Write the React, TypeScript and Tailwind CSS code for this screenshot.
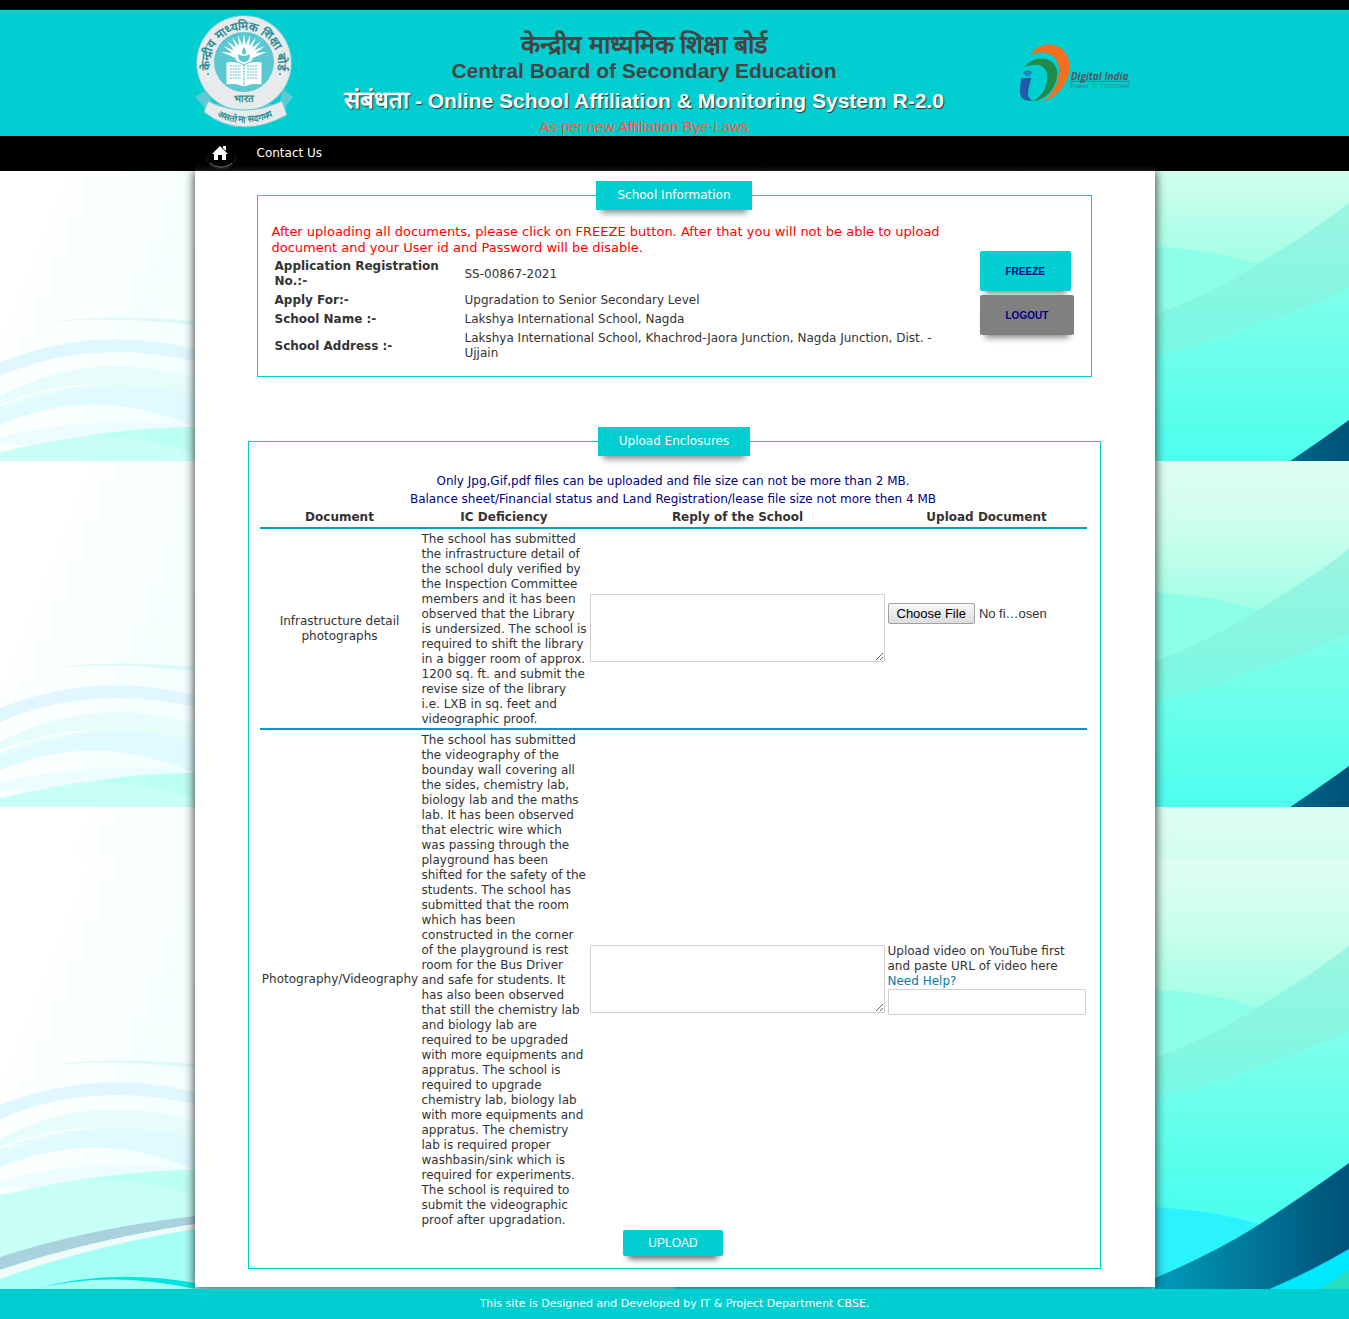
import React, { useId } from "react";

const infrastructureNote = `The school has submitted
the infrastructure detail of
the school duly verified by
the Inspection Committee
members and it has been
observed that the Library
is undersized. The school is
required to shift the library
in a bigger room of approx.
1200 sq. ft. and submit the
revise size of the library
i.e. LXB in sq. feet and
videographic proof.`;

const videographyNote = `The school has submitted
the videography of the
bounday wall covering all
the sides, chemistry lab,
biology lab and the maths
lab. It has been observed
that electric wire which
was passing through the
playground has been
shifted for the safety of the
students. The school has
submitted that the room
which has been
constructed in the corner
of the playground is rest
room for the Bus Driver
and safe for students. It
has also been observed
that still the chemistry lab
and biology lab are
required to be upgraded
with more equipments and
appratus. The school is
required to upgrade
chemistry lab, biology lab
with more equipments and
appratus. The chemistry
lab is required proper
washbasin/sink which is
required for experiments.
The school is required to
submit the videographic
proof after upgradation.`;

function Wave({ height, className }: { height: number; className: string }) {
  const id = useId();
  return (
    <svg
      className={`block w-full shrink-0 ${className}`}
      viewBox={`0 0 1349 ${height}`}
      preserveAspectRatio="none"
      aria-hidden="true"
    >
      <defs>
        <linearGradient id={`${id}l`} x1="0" x2="300" y1="0" y2="120" gradientUnits="userSpaceOnUse">
          <stop offset="0.2" stopColor="#ffffff" />
          <stop offset="1" stopColor="#effffe" />
        </linearGradient>
        <linearGradient id={`${id}r`} x1="0" x2="0" y1="0" y2="350" gradientUnits="userSpaceOnUse">
          <stop offset="0" stopColor="#e0fdf4" />
          <stop offset="0.2" stopColor="#cbfeee" />
          <stop offset="0.42" stopColor="#a2ffe5" />
          <stop offset="1" stopColor="#7effe8" />
        </linearGradient>
        <linearGradient id={`${id}a`} x1="0" x2="0" y1="170" y2="350" gradientUnits="userSpaceOnUse">
          <stop offset="0" stopColor="#80ffea" />
          <stop offset="1" stopColor="#4cffee" />
        </linearGradient>
        <linearGradient id={`${id}b`} x1="0" x2="0" y1="88" y2="248" gradientUnits="userSpaceOnUse">
          <stop offset="0" stopColor="#9cf5e2" />
          <stop offset="0.6" stopColor="#84f6e1" />
          <stop offset="1" stopColor="#76fce6" />
        </linearGradient>
        <linearGradient id={`${id}d`} x1="1155" x2="1340" y1="0" y2="0" gradientUnits="userSpaceOnUse">
          <stop offset="0" stopColor="#009cbb" />
          <stop offset="1" stopColor="#00547a" />
        </linearGradient>
      </defs>
      <rect width="675" height="470" fill={`url(#${id}l)`} />
      <path d="M40 208Q110 198 195 206L400 260V270L195 210Q110 200 40 208Z" fill="#dcfaf5" />
      <path d="M0 247C60 224 120 216 195 234L400 300V320L195 246C120 230 60 236 0 261Z" fill="#e0f7ff" />
      <path d="M0 281C60 250 120 242 195 263L400 330V380L195 312C120 280 60 285 0 309Z" fill="#e6fdfa" />
      <path d="M0 296C60 272 120 262 195 280L400 330V380L195 312C120 280 60 285 0 309Z" fill="#e0fbff" />
      <path d="M0 290Q40 274 85 270" stroke="#fff" strokeWidth="1.5" fill="none" />
      <path d="M0 322Q100 298 195 312V330H0Z" fill="#ecfcff" />
      <path d="M0 337Q110 312 195 312L675 330V470H0Z" fill="#c8fff6" />
      <path d="M90 321Q150 312 195 312V338Q150 322 90 321Z" fill="#bcfff5" />
      <path d="M0 421Q90 382 195 371L675 360V470H0Z" fill="#a5fff5" />
      <path d="M0 399Q90 370 195 358V366Q90 382 0 412Z" fill="#a9d1de" />
      <path d="M0 412Q90 382 195 366V371Q90 388 0 421Z" fill="#effcf9" />
      <path d="M35 431Q110 410 195 425V431Q110 412 35 431Z" fill="#00e4df" />
      <rect x="674" width="675" height="470" fill={`url(#${id}r)`} />
      <path d="M674 132H1155Q1210 134 1258 149L1349 180V470H674Z" fill="#8dffe9" />
      <path d="M674 248V220H1155V200Q1210 180 1258 149Q1310 118 1349 88V240H1155Z" fill={`url(#${id}b)`} />
      <path d="M674 250L1155 240Q1200 232 1255 210Q1310 192 1349 173V470H674Z" fill={`url(#${id}a)`} />
      <path d="M674 349H1155Q1210 352 1260 366V470H674Z" fill="#2bf2ff" />
      <path d="M1155 470V420Q1215 395 1260 366Q1315 330 1349 305V470Z" fill={`url(#${id}d)`} />
      <path d="M1265 433Q1310 414 1349 391V470H1265Z" fill="#00e8ff" />
      <path d="M1316 433Q1332 424 1349 412V470H1316Z" fill="#28dcbe" />
    </svg>
  );
}

function Emblem() {
  const rays = [-75, -60, -45, -30, -15, 0, 15, 30, 45, 60, 75];
  return (
    <svg className="block h-[114px] w-[98px]" viewBox="0 0 98 114" role="img" aria-label="CBSE emblem">
      <path d="M0 83L12 75L18 90L84 90L88 75L98 83L91 92L91 101Q72 113 50 113Q26 113 10 99L9 93Z" fill="#5ccad2" />
      <circle cx="49" cy="49" r="48" fill="#62cbd3" />
      <circle cx="49" cy="49" r="47" fill="#e9eaec" />
      <circle cx="49" cy="48" r="30" fill="#59c8d1" />
      <g fill="#fff">
        {rays.map((a) => (
          <path key={a} d="M46 40L49 20L52 40Z" transform={`rotate(${a} 49 44)`} />
        ))}
        <circle cx="49" cy="42" r="9" />
      </g>
      <path d="M43 40Q49 44 55 40Q55 48 49 48Q43 48 43 40Z" fill="#59c8d1" />
      <path d="M49 33Q53 38 49 41Q45 38 49 33Z" fill="#59c8d1" />
      <path d="M31 48Q41 46 49 51Q57 46 67 48V71Q57 69 49 73Q41 69 31 71Z" fill="#fff" stroke="#59c8d1" />
      <path
        d="M49 51V72M35 52H46M35 55H46M35 58H46M35 61H46M35 64H46M52 52H63M52 55H63M52 58H63M52 61H63M52 64H63"
        stroke="#59c8d1"
        strokeWidth="1.2"
        strokeDasharray="2 0.6"
      />
      <path d="M13 87Q49 105 87 87L92 101Q70 113 50 113Q28 113 9 98Z" fill="#e9eaec" stroke="#62cbd3" />
      <path id="emblem-top" d="M16.5 60A34 34 0 1 1 81.5 60" fill="none" />
      <path id="emblem-bottom" d="M13 97Q49 120 87 97" fill="none" />
      <g fill="#2e8f98" fontFamily="Liberation Sans, sans-serif" fontWeight="bold">
        <text fontSize="12" textAnchor="middle">
          <textPath href="#emblem-top" startOffset="50%">केन्द्रीय माध्यमिक शिक्षा बोर्ड</textPath>
        </text>
        <text x="49" y="88" fontSize="10" textAnchor="middle">भारत</text>
        <text fontSize="9" textAnchor="middle">
          <textPath href="#emblem-bottom" startOffset="50%">असतो मा सदगमय</textPath>
        </text>
        <circle cx="13" cy="60" r="1" />
        <circle cx="85" cy="60" r="1" />
      </g>
    </svg>
  );
}

function DigitalIndia() {
  return (
    <svg className="block h-[60px] w-[114px]" viewBox="57 40 342 180" role="img" aria-label="Digital India">
      <path d="M92 77C112 30 204 28 209 108C210 158 172 204 130 214C158 192 176 162 177 122C178 74 134 56 92 77Z" fill="#f37021" />
      <path d="M75 112C95 76 168 74 172 130C172 172 138 212 98 215C128 200 144 168 142 136C139 104 105 98 75 112Z" fill="#208b48" />
      <path d="M64 145H94C88 166 82 186 85 200Q88 210 100 214Q62 216 60 190Q60 168 64 145Z" fill="#2458a8" />
      <path d="M69 130L76 123H90L97 130L83 142Z" fill="#1f6fb0" />
      <path d="M69 130H97M76 123L83 130L90 123M78 130L83 141L88 130" stroke="#39a7cf" strokeWidth="1.5" fill="none" />
      <g fill="#4c5a60">
        <text x="212" y="151" fontSize="30" fontWeight="bold" fontStyle="italic" fontFamily="Open Sans, sans-serif">
          Digital India
        </text>
        <path d="M208 155H390" stroke="#4c5a60" strokeWidth="2" />
        <text x="211" y="174" fontSize="19" fill="#3d7f86" fontFamily="DejaVu Sans, sans-serif">
          Power To Empower
        </text>
      </g>
    </svg>
  );
}

const legendClass =
  "mx-auto bg-[#00ced1] px-[21px] text-[12px] leading-[29px] text-white shadow-[0_8px_6px_-5px_rgba(0,0,0,0.45)]";
const textareaClass =
  "block h-[68px] w-[295px] resize rounded-[1px] border border-[#d0d0d0] bg-white p-1 outline-none";

export default function App() {
  return (
    <div className="flex min-h-screen flex-col bg-white font-['DejaVu_Sans',Verdana,sans-serif] text-[12px] leading-[15px] text-[#333]">
      <header className="border-t-10 border-black bg-[#00ced1]">
        <div className="mx-auto flex h-[126px] max-w-[960px] items-start overflow-hidden">
          <div className="w-[100px] shrink-0 pt-1">
            <Emblem />
          </div>
          <div className="flex-1 pt-5 text-center font-['Liberation_Sans',Arial,sans-serif] text-[21px] font-bold text-[#444]">
            <p className="text-[25px] leading-[28px]">केन्द्रीय माध्यमिक शिक्षा बोर्ड</p>
            <p className="leading-[26px]">Central Board of Secondary Education</p>
            <h1 className="leading-[32px] whitespace-nowrap text-white [text-shadow:1px_1px_1px_#333]">
              <span className="text-[24px]">संबंधता</span> - Online School Affiliation &amp; Monitoring System R-2.0
            </h1>
            <p className="text-[15px] leading-[20px] font-normal text-[#ff5a36]">As per new Affiliation Bye-Laws</p>
          </div>
          <div className="w-[161px] shrink-0 pt-[33px] pl-[25px]">
            <DigitalIndia />
          </div>
        </div>
      </header>

      <nav className="relative z-10 bg-black">
        <div className="mx-auto flex h-[35px] max-w-[960px] items-center bg-linear-to-b from-black from-70% to-[#161616] pl-[10px] text-white">
          <a href="#home" aria-label="Home" className="block h-[34px] w-[32px]">
            <svg viewBox="0 0 32 34" className="block h-[34px] w-[32px]" aria-hidden="true">
              <path d="M1 19A15 13 0 0 0 31 19" fill="none" stroke="#222" />
              <path d="M5 26A15 13 0 0 0 27 26" fill="none" stroke="#777" />
              <path d="M15 9L23 17H21V23H17V18H13V23H9V17H7ZM18 9H21V14L18 11Z" fill="#fff" />
            </svg>
          </a>
          <a href="#contact" className="ml-5">Contact Us</a>
        </div>
      </nav>

      <div className="relative flex-1">
        <div className="absolute inset-0 flex flex-col justify-end overflow-hidden">
          <Wave height={346} className="h-[346px]" />
          <Wave height={346} className="h-[346px]" />
          <Wave height={51} className="h-[51px]" />
          <Wave height={431} className="h-[431px]" />
        </div>

        <main className="relative mx-auto mb-[2px] max-w-[960px] bg-white pt-[10px] pr-[54px] pb-[18px] pl-[53px] shadow-[0_0_10px_#222]">
          <fieldset className="mx-[9px] min-w-0 border border-[#00ced1] pb-[12px]">
            <legend className={legendClass}>School Information</legend>
            <div className="flex items-start pt-[14px] pl-[14px]">
              <div className="w-[676px]">
                <p className="text-[13px] leading-[16px] text-[#f00]">
                  After uploading all documents, please click on FREEZE button. After that you will not be able to
                  upload
                  <br />
                  document and your User id and Password will be disable.
                </p>
                <table className="w-full table-fixed border-separate border-spacing-[2px] text-left">
                  <colgroup>
                    <col className="w-[188px]" />
                    <col />
                  </colgroup>
                  <tbody>
                    <tr>
                      <th scope="row" className="p-px">Application Registration<br />No.:-</th>
                      <td className="p-px">SS-00867-2021</td>
                    </tr>
                    <tr>
                      <th scope="row" className="p-px">Apply For:-</th>
                      <td className="p-px">Upgradation to Senior Secondary Level</td>
                    </tr>
                    <tr>
                      <th scope="row" className="p-px">School Name :-</th>
                      <td className="p-px">Lakshya International School, Nagda</td>
                    </tr>
                    <tr>
                      <th scope="row" className="p-px">School Address :-</th>
                      <td className="p-px">
                        Lakshya International School, Khachrod-Jaora Junction, Nagda Junction, Dist. -<br />
                        Ujjain
                      </td>
                    </tr>
                  </tbody>
                </table>
              </div>
              <div className="ml-8 flex flex-col items-start gap-1 pt-[27px] font-['Liberation_Sans',Arial,sans-serif] text-[10px] font-bold text-[#000080]">
                <button type="button" className="h-10 rounded-[2px] bg-[#00ced1] px-[26px] shadow-[0_8px_6px_-5px_rgba(0,0,0,0.45)]">
                  FREEZE
                </button>
                <button type="button" className="relative h-10 rounded-[2px] bg-[#808080] px-[26px] shadow-[0_8px_6px_-5px_rgba(0,0,0,0.45)]">
                  LOGOUT
                </button>
              </div>
            </div>
          </fieldset>

          <fieldset className="mt-[50px] min-w-0 border border-[#00ced1] pb-[12px]">
            <legend className={legendClass}>Upload Enclosures</legend>
            <div className="pt-4 pr-[13px] pl-[11px]">
              <div className="text-center leading-[18px] text-[#000080]">
                <p>Only Jpg,Gif,pdf files can be uploaded and file size can not be more than 2 MB.</p>
                <p>Balance sheet/Financial status and Land Registration/lease file size not more then 4 MB</p>
              </div>
              <table className="w-full table-fixed border-separate border-spacing-0">
                <colgroup>
                  <col className="w-[160px]" />
                  <col className="w-[169px]" />
                  <col className="w-[298px]" />
                  <col />
                </colgroup>
                <thead>
                  <tr>
                    <th className="border-b-2 border-[#0099cc] px-px pt-[2px] pb-[2px]">Document</th>
                    <th className="border-b-2 border-[#0099cc] px-px pt-[2px] pb-[2px]">IC Deficiency</th>
                    <th className="border-b-2 border-[#0099cc] px-px pt-[2px] pb-[2px]">Reply of the School</th>
                    <th className="border-b-2 border-[#0099cc] px-px pt-[2px] pb-[2px]">Upload Document</th>
                  </tr>
                </thead>
                <tbody>
                  <tr>
                    <td className="border-b-2 border-[#0099cc] text-center">
                      Infrastructure detail
                      <br />
                      photographs
                    </td>
                    <td className="border-b-2 border-[#0099cc] pt-[3px] pb-px pl-[2px] whitespace-pre">{infrastructureNote}</td>
                    <td className="border-b-2 border-[#0099cc] pb-px pl-px">
                      <textarea aria-label="Reply on infrastructure" className={textareaClass} />
                    </td>
                    <td className="border-b-2 border-[#0099cc] pb-[30px] pl-px">
                      <input
                        type="file"
                        aria-label="Upload infrastructure photographs"
                        className="block w-[160px] font-['Liberation_Sans',Arial,sans-serif] text-[13px] leading-[19px] file:mr-1 file:h-[21px] file:rounded-[2px] file:border file:border-solid file:border-[#a0a0a0] file:bg-linear-to-b file:from-[#f8f8f8] file:to-[#dddddd] file:px-2 file:text-black"
                      />
                    </td>
                  </tr>
                  <tr>
                    <td className="pl-px text-center whitespace-nowrap">Photography/Videography</td>
                    <td className="pt-[3px] pb-px pl-[2px] whitespace-pre">{videographyNote}</td>
                    <td className="pb-px pl-px">
                      <textarea aria-label="Reply on videography" className={textareaClass} />
                    </td>
                    <td className="pl-px">
                      <label htmlFor="video-url" className="block">
                        Upload video on YouTube first
                        <br />
                        and paste URL of video here
                      </label>
                      <a href="#help" className="block text-[#0a7aa5]">Need Help?</a>
                      <input
                        id="video-url"
                        type="text"
                        className="block h-[26px] w-[198px] rounded-[1px] border border-[#d0d0d0] px-1"
                      />
                    </td>
                  </tr>
                </tbody>
              </table>
              <div className="flex justify-center pt-px">
                <button
                  type="button"
                  className="h-[26px] rounded-[2px] bg-[#00ced1] px-[25px] font-['Liberation_Sans',Arial,sans-serif] text-[12px] text-white shadow-[0_8px_6px_-5px_rgba(0,0,0,0.6)]"
                >
                  UPLOAD
                </button>
              </div>
            </div>
          </fieldset>
        </main>
      </div>

      <footer className="relative bg-[#00ced1] text-center text-[11px] leading-[30px] text-white">
        This site is Designed and Developed by IT &amp; Project Department CBSE.
      </footer>
    </div>
  );
}
